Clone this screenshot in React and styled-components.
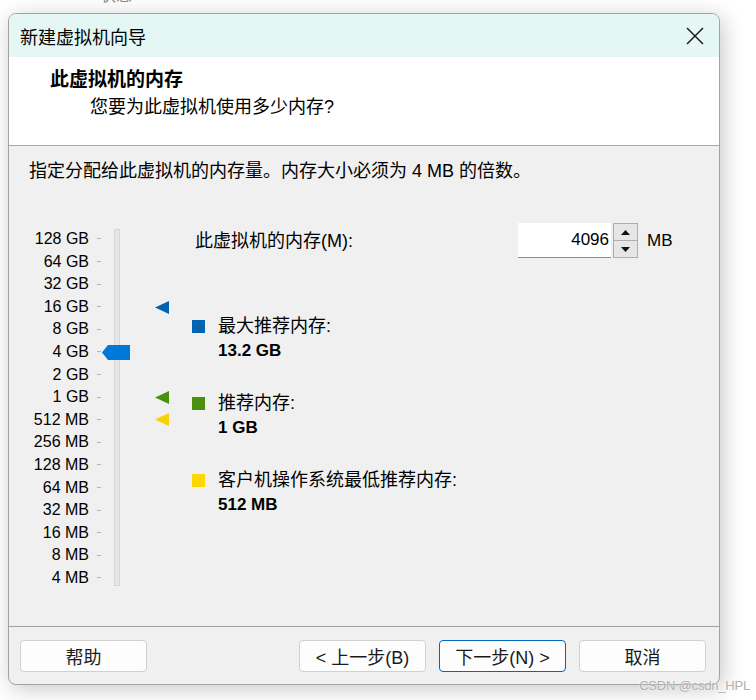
import React from 'react';
import styled, { createGlobalStyle } from 'styled-components';

const GlobalStyle = createGlobalStyle`
  html, body {
    margin: 0;
    padding: 0;
    background: #ffffff;
  }
  body {
    font-family: "Liberation Sans", "Noto Sans CJK SC", sans-serif;
    color: #000;
  }
`;

const ROW = 22.6;
const STOPS = [
  '128 GB', '64 GB', '32 GB', '16 GB', '8 GB', '4 GB', '2 GB', '1 GB',
  '512 MB', '256 MB', '128 MB', '64 MB', '32 MB', '16 MB', '8 MB', '4 MB',
];

// centre of a value on the log scale, measured from the top of the scale box
const posOf = (mb) => 16 + (17 - Math.log2(mb)) * ROW;

// the slider draws the max marker a bit above the exact 13.2 GB spot
const MARKERS = [
  { mb: 15800, color: '#0063b1' },
  { mb: 1024, color: '#4a900f' },
  { mb: 512, color: '#f7d100' },
];

const LEGENDS = [
  { color: '#0063b1', label: '最大推荐内存:', value: '13.2 GB' },
  { color: '#4a900f', label: '推荐内存:', value: '1 GB' },
  { color: '#fcd800', label: '客户机操作系统最低推荐内存:', value: '512 MB' },
];

const Page = styled.div`
  position: relative;
  width: 756px;
  height: 700px;
  overflow: hidden;
  padding-left: 8px;
  box-sizing: border-box;
`;

const TopPeek = styled.div`
  height: 13px;
  overflow: hidden;
  padding-left: 92px;
  color: #8a8a8a;
  font-size: 16px;
  line-height: 18px;

  span {
    display: block;
    margin-top: -13px;
  }
`;

const Window = styled.div`
  width: 712px;
  height: 672px;
  box-sizing: border-box;
  border: 1px solid #a3a3a3;
  border-radius: 8px;
  overflow: hidden;
  display: flex;
  flex-direction: column;
  background: #f0f0f0;
  box-shadow: 3px 4px 22px rgba(0, 0, 0, 0.22);
`;

const TitleBar = styled.div`
  height: 43px;
  flex-shrink: 0;
  background: #e4f7f4;
  display: flex;
  align-items: center;
  justify-content: space-between;
  padding: 0 15px 0 11px;
  font-size: 18px;
`;

const CloseIcon = styled.svg`
  width: 18px;
  height: 18px;
  display: block;
`;

const Header = styled.div`
  height: 89px;
  flex-shrink: 0;
  box-sizing: border-box;
  background: #ffffff;
  border-bottom: 1px solid #a6a6a6;
  padding: 13px 0 0 41px;
`;

const HeadTitle = styled.div`
  font-size: 19px;
  font-weight: 700;
  line-height: 20px;
`;

const HeadSub = styled.div`
  font-size: 18px;
  line-height: 20px;
  margin-top: 7px;
  padding-left: 40px;
`;

const Body = styled.div`
  flex: 1;
  padding: 15px 0 0 20px;
`;

const Instruction = styled.div`
  font-size: 18px;
  line-height: 20px;
`;

const MainArea = styled.div`
  display: flex;
  align-items: flex-start;
  margin-top: 42px;
`;

const Scale = styled.div`
  position: relative;
  width: 141px;
  display: flex;
  align-items: flex-start;
  flex-shrink: 0;
`;

const Labels = styled.div`
  display: grid;
  grid-auto-rows: ${ROW}px;
  margin-top: 4.7px;
`;

const StopRow = styled.div`
  display: flex;
  align-items: center;
`;

const StopLabel = styled.span`
  width: 60px;
  text-align: right;
  font-size: 16px;
  line-height: 18px;
  white-space: nowrap;
`;

const Tick = styled.span`
  width: 4px;
  height: 1px;
  margin-left: 8px;
  background: #b4b4b4;
`;

const Track = styled.div`
  width: 6px;
  height: 357px;
  box-sizing: border-box;
  margin: 6px 0 0 13px;
  background: #e6e6e6;
  border: 1px solid #d5d5d5;
`;

const Thumb = styled.svg`
  position: absolute;
  left: 73px;
  width: 28px;
  height: 15px;
  display: block;
`;

const Marker = styled.svg`
  position: absolute;
  left: 126px;
  width: 14px;
  height: 13px;
  display: block;
`;

const Side = styled.div`
  margin-left: 22px;
  display: flex;
  flex-direction: column;
`;

const MemoryRow = styled.div`
  display: flex;
  align-items: center;
  height: 35px;
`;

const MemLabel = styled.div`
  width: 326px;
  box-sizing: border-box;
  padding-left: 3px;
  font-size: 18px;
  line-height: 20px;
`;

const NumberBox = styled.div`
  width: 93px;
  height: 35px;
  box-sizing: border-box;
  background: #ffffff;
  border-bottom: 1px solid #8c8c8c;
  display: flex;
  align-items: center;
  justify-content: flex-end;
  padding-right: 2px;
  font-size: 17px;
`;

const Spinner = styled.div`
  width: 25px;
  height: 35px;
  margin-left: 2px;
  display: flex;
  flex-direction: column;
`;

const SpinButton = styled.div`
  flex: 1;
  box-sizing: border-box;
  border: 1px solid #adadad;
  background: #e6e6e6;
  display: flex;
  align-items: center;
  justify-content: center;
  & + & {
    border-top: none;
  }
`;

const Unit = styled.div`
  margin-left: 9px;
  font-size: 17px;
`;

const LegendList = styled.div`
  display: flex;
  flex-direction: column;
  gap: 32px;
  margin-top: 58px;
`;

const Legend = styled.div`
  display: grid;
  grid-template-columns: 13px auto;
  column-gap: 13px;
  row-gap: 5px;
  align-items: center;
`;

const Swatch = styled.span`
  width: 13px;
  height: 13px;
  background: ${(p) => p.color};
`;

const LegendLabel = styled.div`
  font-size: 18px;
  line-height: 20px;
  white-space: nowrap;
`;

const LegendValue = styled.div`
  grid-column: 2;
  font-size: 17px;
  font-weight: 700;
  line-height: 20px;
`;

const Footer = styled.div`
  height: 58px;
  flex-shrink: 0;
  box-sizing: border-box;
  border-top: 1px solid #a0a0a0;
  display: flex;
  gap: 13px;
  padding: 13px 13px 0 11px;
`;

const Button = styled.button`
  width: 127px;
  height: 32px;
  box-sizing: border-box;
  background: #fdfdfd;
  border: 1px solid ${(p) => (p.primary ? '#0067c0' : '#d0d0d0')};
  border-radius: 4px;
  font-family: inherit;
  font-size: 18px;
  color: #1a1a1a;
  padding: 0;
  margin-left: ${(p) => (p.pushRight ? 'auto' : '0')};
`;

const Watermark = styled.div`
  position: absolute;
  right: 6px;
  top: 678px;
  font-size: 13px;
  color: #b0b0b0;
  text-shadow: 0 0 2px #fff;
  letter-spacing: -0.2px;
`;

function Triangle({ up }) {
  return (
    <svg width="9" height="5" viewBox="0 0 9 5">
      <polygon points={up ? '4.5,0 9,5 0,5' : '0,0 9,0 4.5,5'} fill="#111" />
    </svg>
  );
}

export default function App() {
  return (
    <Page>
      <GlobalStyle />
      <TopPeek><span>状态</span></TopPeek>
      <Window>
        <TitleBar>
          <span>新建虚拟机向导</span>
          <CloseIcon viewBox="0 0 18 18">
            <path d="M1 1 L17 17 M17 1 L1 17" stroke="#1c1c1c" strokeWidth="1.5" fill="none" />
          </CloseIcon>
        </TitleBar>

        <Header>
          <HeadTitle>此虚拟机的内存</HeadTitle>
          <HeadSub>您要为此虚拟机使用多少内存?</HeadSub>
        </Header>

        <Body>
          <Instruction>指定分配给此虚拟机的内存量。内存大小必须为 4 MB 的倍数。</Instruction>

          <MainArea>
            <Scale>
              <Labels>
                {STOPS.map((s) => (
                  <StopRow key={s}>
                    <StopLabel>{s}</StopLabel>
                    <Tick />
                  </StopRow>
                ))}
              </Labels>
              <Track />
              <Thumb viewBox="0 0 28 15" style={{ top: posOf(4096) - 7.5 }}>
                <polygon points="6,0 28,0 28,15 6,15 0,7.5" fill="#0078d7" />
              </Thumb>
              {MARKERS.map((m) => (
                <Marker key={m.mb} viewBox="0 0 14 13" style={{ top: posOf(m.mb) - 6.5 }}>
                  <polygon points="0,6.5 14,0 14,13" fill={m.color} />
                </Marker>
              ))}
            </Scale>

            <Side>
              <MemoryRow>
                <MemLabel>此虚拟机的内存(M):</MemLabel>
                <NumberBox>4096</NumberBox>
                <Spinner>
                  <SpinButton><Triangle up /></SpinButton>
                  <SpinButton><Triangle /></SpinButton>
                </Spinner>
                <Unit>MB</Unit>
              </MemoryRow>

              <LegendList>
                {LEGENDS.map((l) => (
                  <Legend key={l.label}>
                    <Swatch color={l.color} />
                    <LegendLabel>{l.label}</LegendLabel>
                    <LegendValue>{l.value}</LegendValue>
                  </Legend>
                ))}
              </LegendList>
            </Side>
          </MainArea>
        </Body>

        <Footer>
          <Button>帮助</Button>
          <Button pushRight>&lt; 上一步(B)</Button>
          <Button primary>下一步(N) &gt;</Button>
          <Button>取消</Button>
        </Footer>
      </Window>
      <Watermark>CSDN @csdn_HPL</Watermark>
    </Page>
  );
}
